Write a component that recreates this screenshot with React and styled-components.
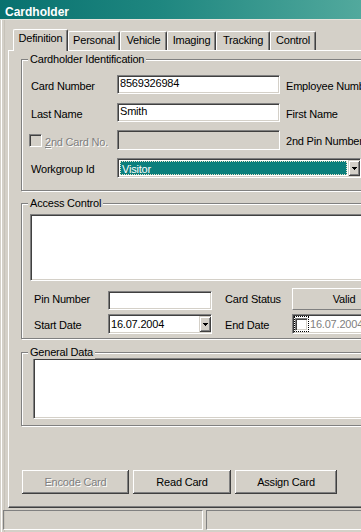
import React from "react";
import styled, { createGlobalStyle } from "styled-components";

const GlobalStyle = createGlobalStyle`
  html, body { margin: 0; padding: 0; background: #d4d0c8; }
  body { font-family: "Liberation Sans", Arial, sans-serif; font-size: 11px; overflow: hidden; }
  * { box-sizing: border-box; }
`;

const FACE = "#d4d0c8";
const SHADOW = "#808080";
const DARK = "#404040";

const Window = styled.div`
  width: 361px;
  height: 532px;
  overflow: hidden;
  display: flex;
  flex-direction: column;
  background: ${FACE};
  color: #000;
  letter-spacing: -0.2px;
`;

const TitleBar = styled.div`
  flex: none;
  height: 19px;
  padding: 5px 0 0 5px;
  background: linear-gradient(90deg, #08716f 0%, #1f8780 45%, #52a99d 100%);
  color: #fff;
  font-weight: bold;
  font-size: 12px;
  line-height: 14px;
  letter-spacing: 0;
`;

const Body = styled.div`
  flex: 1;
  display: flex;
  flex-direction: column;
  border-top: 1px solid #e6e3db;
  box-shadow: inset 1px 0 ${FACE}, inset 2px 0 #fff, inset 4px 0 ${FACE}, inset 5px 0 #c6c2b9;
`;

const Client = styled.div`
  flex: none;
  display: flex;
  flex-direction: column;
  padding: 9px 0 0 8px;
`;

const TabStrip = styled.div`
  display: flex;
  align-items: flex-end;
  height: 22px;
  margin-left: 5px;
  margin-bottom: -1px;
  position: relative;
  z-index: 1;
`;

const Tab = styled.div`
  flex: none;
  width: ${(p) => p.$w}px;
  height: ${(p) => (p.$active ? 22 : 19)}px;
  margin-bottom: ${(p) => (p.$active ? 0 : 1)}px;
  background: ${FACE};
  border-top: 1px solid #fff;
  border-left: 1px solid #fff;
  border-right: 1px solid ${DARK};
  box-shadow: inset -1px 0 ${SHADOW};
  border-radius: 2px 2px 0 0;
  text-align: center;
  line-height: 16px;
  white-space: nowrap;
`;

const TabPage = styled.div`
  flex: none;
  width: 470px;
  height: 458px;
  display: flex;
  flex-direction: column;
  align-items: flex-start;
  padding: 8px 0 0 12px;
  border-top: 1px solid #fff;
  border-left: 1px solid #fff;
  border-right: 1px solid ${DARK};
  border-bottom: 1px solid ${DARK};
  box-shadow: inset 0 -1px ${SHADOW}, inset -1px 0 ${SHADOW};
`;

const GroupBox = styled.div`
  position: relative;
  flex: none;
  width: 440px;
  height: ${(p) => p.$h}px;
  margin-top: ${(p) => p.$mt || 0}px;
  padding: ${(p) => p.$pad};
  border: 1px solid ${SHADOW};
  box-shadow: 1px 1px 0 #fff, inset 1px 1px 0 #fff;
`;

const Legend = styled.span`
  position: absolute;
  top: -7px;
  left: 6px;
  padding: 0 2px;
  background: ${FACE};
  line-height: 13px;
  white-space: nowrap;
`;

const IdGrid = styled.div`
  display: grid;
  grid-template-columns: 86px 163px 180px;
  grid-template-rows: 28px 27px 28px 20px;
  align-items: start;
`;

const Label = styled.div`
  padding-top: 4px;
  padding-left: ${(p) => p.$pl || 0}px;
  line-height: 15px;
  white-space: nowrap;
  color: ${(p) => (p.$disabled ? SHADOW : "#000")};
  text-shadow: ${(p) => (p.$disabled ? "1px 1px 0 #fff" : "none")};
`;

const sunken = `
  border: 1px solid;
  border-color: ${SHADOW} #fff #fff ${SHADOW};
  box-shadow: inset 1px 1px ${DARK}, inset -1px -1px ${FACE};
`;

const TextBox = styled.div`
  height: ${(p) => p.$h || 19}px;
  width: ${(p) => (p.$w ? `${p.$w}px` : "auto")};
  align-self: ${(p) => p.$align || "start"};
  ${sunken}
  background: ${(p) => (p.$disabled ? FACE : "#fff")};
  padding: 1px 2px 0;
  line-height: 13px;
  white-space: nowrap;
  overflow: hidden;
`;

const CheckRow = styled.div`
  display: flex;
  align-items: center;
  gap: 3px;
  margin-left: -2px;
  height: 20px;
`;

const CheckBox = styled.div`
  flex: none;
  width: 13px;
  height: 13px;
  ${sunken}
  background: ${(p) => (p.$disabled ? FACE : "#fff")};
`;

const Combo = styled.div`
  grid-column: 2 / 4;
  width: 244px;
  height: 20px;
  display: flex;
  ${sunken}
  background: #fff;
  padding: 1px 0 1px 1px;
`;

const ComboSelection = styled.div`
  flex: 1;
  margin: 1px;
  height: 14px;
  border: 1px dotted #e8e4c8;
  background: #0b7f7c;
  color: #fff;
  padding: 1px 0 0 1px;
  line-height: 12px;
  white-space: nowrap;
`;

const DropButton = styled.div`
  flex: none;
  width: 12px;
  height: 100%;
  display: flex;
  align-items: center;
  justify-content: center;
  background: ${FACE};
  box-shadow: inset 1px 1px ${FACE}, inset -1px -1px ${DARK}, inset 2px 2px #fff,
    inset -2px -2px ${SHADOW};
`;

const Arrow = () => (
  <svg width="5" height="3" viewBox="0 0 5 3" shapeRendering="crispEdges">
    <rect x="0" y="0" width="5" height="1" fill="#000" />
    <rect x="1" y="1" width="3" height="1" fill="#000" />
    <rect x="2" y="2" width="1" height="1" fill="#000" />
  </svg>
);

const WhiteBox = styled.div`
  flex: none;
  width: ${(p) => p.$w}px;
  height: ${(p) => p.$h}px;
  ${sunken}
  background: #fff;
`;

const AccessGrid = styled.div`
  display: grid;
  grid-template-columns: 74px 104px 80px 104px;
  grid-template-rows: 22px 20px;
  row-gap: 4px;
  margin: 7px 0 0 4px;
`;

const StatusButton = styled.div`
  height: 22px;
  border: 1px solid;
  border-color: #fff ${SHADOW} ${SHADOW} #fff;
  text-align: center;
  line-height: 20px;
  white-space: nowrap;
`;

const DatePicker = styled.div`
  width: 104px;
  height: 20px;
  display: flex;
  align-items: stretch;
  ${sunken}
  background: #fff;
  padding: 1px 0 1px 1px;
`;

const DateText = styled.div`
  flex: 1;
  padding-left: ${(p) => p.$pl}px;
  line-height: 16px;
  white-space: nowrap;
  overflow: hidden;
  color: ${(p) => (p.$disabled ? SHADOW : "#000")};
`;

const FocusBox = styled.div`
  flex: none;
  display: flex;
  align-items: center;
  justify-content: center;
  width: 15px;
  border: 1px dotted #000;
`;

const ButtonRow = styled.div`
  display: flex;
  gap: 4px;
  margin: 44px 0 0 1px;
`;

const PushButton = styled.div`
  flex: none;
  width: ${(p) => p.$w}px;
  height: 24px;
  background: ${FACE};
  box-shadow: inset -1px -1px ${DARK}, inset 1px 1px #fff, inset -2px -2px ${SHADOW},
    inset 2px 2px ${FACE};
  text-align: center;
  line-height: 24px;
  white-space: nowrap;
  color: ${(p) => (p.$disabled ? SHADOW : "#000")};
  text-shadow: ${(p) => (p.$disabled ? "1px 1px 0 #fff" : "none")};
`;

const StatusBar = styled.div`
  flex: none;
  width: 480px;
  display: flex;
  gap: 3px;
  height: 20px;
  margin: 2px 0 2px 3px;
`;

const StatusPanel = styled.div`
  flex: ${(p) => (p.$w ? "none" : "1")};
  width: ${(p) => (p.$w ? `${p.$w}px` : "auto")};
  border: 1px solid;
  border-color: ${SHADOW} #fff #fff ${SHADOW};
`;

const tabs = [
  { label: "Definition", w: 55, active: true },
  { label: "Personal", w: 52 },
  { label: "Vehicle", w: 47 },
  { label: "Imaging", w: 49 },
  { label: "Tracking", w: 54 },
  { label: "Control", w: 46 },
];

export default function App() {
  return (
    <>
      <GlobalStyle />
      <Window>
        <TitleBar>Cardholder</TitleBar>
        <Body>
          <Client>
            <TabStrip>
              {tabs.map((t) => (
                <Tab key={t.label} $w={t.w} $active={t.active}>
                  {t.label}
                </Tab>
              ))}
            </TabStrip>
            <TabPage>
              <GroupBox $h={132} $pad="15px 0 0 9px">
                <Legend>Cardholder Identification</Legend>
                <IdGrid>
                  <Label>Card Number</Label>
                  <TextBox>8569326984</TextBox>
                  <Label $pl={6}>Employee Number</Label>

                  <Label>Last Name</Label>
                  <TextBox>Smith</TextBox>
                  <Label $pl={6}>First Name</Label>

                  <CheckRow>
                    <CheckBox $disabled />
                    <Label $disabled>
                      <u>2</u>nd Card No.
                    </Label>
                  </CheckRow>
                  <TextBox $disabled $h={20} />
                  <Label $pl={6}>2nd Pin Number</Label>

                  <Label>Workgroup Id</Label>
                  <Combo>
                    <ComboSelection>Visitor</ComboSelection>
                    <DropButton>
                      <Arrow />
                    </DropButton>
                  </Combo>
                </IdGrid>
              </GroupBox>

              <GroupBox $h={136} $mt={12} $pad="10px 0 0 8px">
                <Legend>Access Control</Legend>
                <WhiteBox $w={420} $h={67} />
                <AccessGrid>
                  <Label>Pin Number</Label>
                  <TextBox $align="end" $w={104} />
                  <Label $pl={13}>Card Status</Label>
                  <StatusButton>Valid</StatusButton>

                  <Label>Start Date</Label>
                  <DatePicker>
                    <DateText $pl={1}>16.07.2004</DateText>
                    <DropButton>
                      <Arrow />
                    </DropButton>
                  </DatePicker>
                  <Label $pl={13}>End Date</Label>
                  <DatePicker>
                    <FocusBox>
                      <CheckBox />
                    </FocusBox>
                    <DateText $pl={1} $disabled>
                      16.07.2004
                    </DateText>
                  </DatePicker>
                </AccessGrid>
              </GroupBox>

              <GroupBox $h={74} $mt={13} $pad="5px 0 0 11px">
                <Legend>General Data</Legend>
                <WhiteBox $w={420} $h={61} />
              </GroupBox>

              <ButtonRow>
                <PushButton $w={107} $disabled>
                  Encode Card
                </PushButton>
                <PushButton $w={98}>Read Card</PushButton>
                <PushButton $w={102}>Assign Card</PushButton>
              </ButtonRow>
            </TabPage>
          </Client>
          <StatusBar>
            <StatusPanel $w={200} />
            <StatusPanel />
          </StatusBar>
        </Body>
      </Window>
    </>
  );
}
